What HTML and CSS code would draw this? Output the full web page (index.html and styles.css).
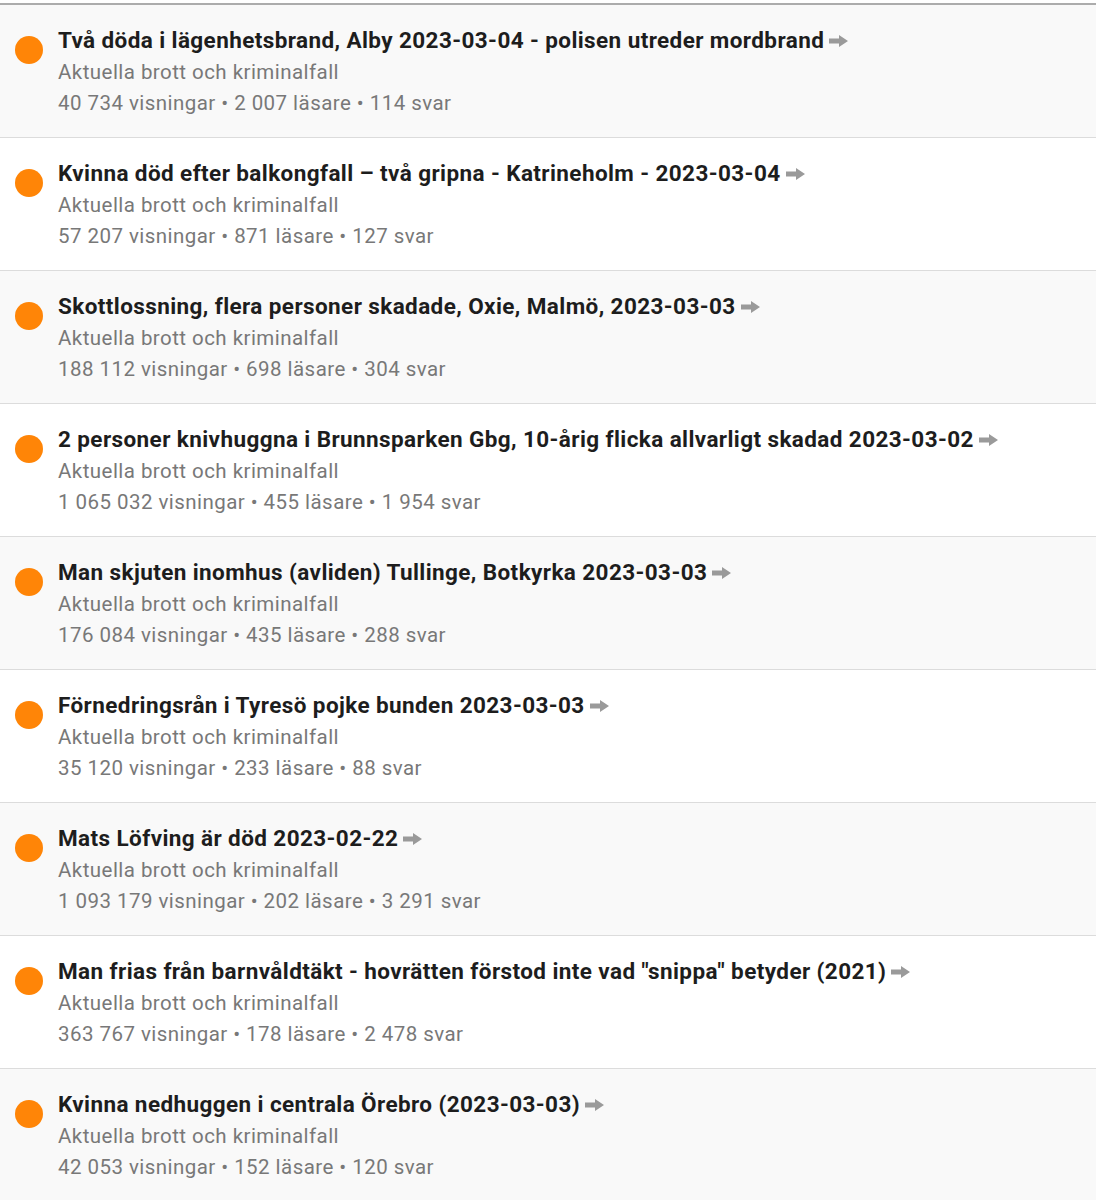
FILE: index.html
```html
<!DOCTYPE html>
<html lang="sv">
<head>
<meta charset="utf-8">
<title>Trådar</title>
<link rel="stylesheet" href="styles.css">
</head>
<body>
<ul class="threads">
  <li class="thread">
    <span class="dot"></span>
    <div class="body">
      <div class="title">Två döda i lägenhetsbrand, Alby 2023-03-04 - polisen utreder mordbrand<svg class="arrow" viewBox="0 0 19 12" width="19" height="12"><path d="M0 3.5H10V0L19 6L10 12V8.5H0Z"/></svg></div>
      <div class="forum">Aktuella brott och kriminalfall</div>
      <div class="stats">40 734 visningar • 2 007 läsare • 114 svar</div>
    </div>
  </li>
  <li class="thread">
    <span class="dot"></span>
    <div class="body">
      <div class="title">Kvinna död efter balkongfall – två gripna - Katrineholm - 2023-03-04<svg class="arrow" viewBox="0 0 19 12" width="19" height="12"><path d="M0 3.5H10V0L19 6L10 12V8.5H0Z"/></svg></div>
      <div class="forum">Aktuella brott och kriminalfall</div>
      <div class="stats">57 207 visningar • 871 läsare • 127 svar</div>
    </div>
  </li>
  <li class="thread">
    <span class="dot"></span>
    <div class="body">
      <div class="title">Skottlossning, flera personer skadade, Oxie, Malmö, 2023-03-03<svg class="arrow" viewBox="0 0 19 12" width="19" height="12"><path d="M0 3.5H10V0L19 6L10 12V8.5H0Z"/></svg></div>
      <div class="forum">Aktuella brott och kriminalfall</div>
      <div class="stats">188 112 visningar • 698 läsare • 304 svar</div>
    </div>
  </li>
  <li class="thread">
    <span class="dot"></span>
    <div class="body">
      <div class="title">2 personer knivhuggna i Brunnsparken Gbg, 10-årig flicka allvarligt skadad 2023-03-02<svg class="arrow" viewBox="0 0 19 12" width="19" height="12"><path d="M0 3.5H10V0L19 6L10 12V8.5H0Z"/></svg></div>
      <div class="forum">Aktuella brott och kriminalfall</div>
      <div class="stats">1 065 032 visningar • 455 läsare • 1 954 svar</div>
    </div>
  </li>
  <li class="thread">
    <span class="dot"></span>
    <div class="body">
      <div class="title">Man skjuten inomhus (avliden) Tullinge, Botkyrka 2023-03-03<svg class="arrow" viewBox="0 0 19 12" width="19" height="12"><path d="M0 3.5H10V0L19 6L10 12V8.5H0Z"/></svg></div>
      <div class="forum">Aktuella brott och kriminalfall</div>
      <div class="stats">176 084 visningar • 435 läsare • 288 svar</div>
    </div>
  </li>
  <li class="thread">
    <span class="dot"></span>
    <div class="body">
      <div class="title">Förnedringsrån i Tyresö pojke bunden 2023-03-03<svg class="arrow" viewBox="0 0 19 12" width="19" height="12"><path d="M0 3.5H10V0L19 6L10 12V8.5H0Z"/></svg></div>
      <div class="forum">Aktuella brott och kriminalfall</div>
      <div class="stats">35 120 visningar • 233 läsare • 88 svar</div>
    </div>
  </li>
  <li class="thread">
    <span class="dot"></span>
    <div class="body">
      <div class="title">Mats Löfving är död 2023-02-22<svg class="arrow" viewBox="0 0 19 12" width="19" height="12"><path d="M0 3.5H10V0L19 6L10 12V8.5H0Z"/></svg></div>
      <div class="forum">Aktuella brott och kriminalfall</div>
      <div class="stats">1 093 179 visningar • 202 läsare • 3 291 svar</div>
    </div>
  </li>
  <li class="thread">
    <span class="dot"></span>
    <div class="body">
      <div class="title">Man frias från barnvåldtäkt - hovrätten förstod inte vad "snippa" betyder (2021)<svg class="arrow" viewBox="0 0 19 12" width="19" height="12"><path d="M0 3.5H10V0L19 6L10 12V8.5H0Z"/></svg></div>
      <div class="forum">Aktuella brott och kriminalfall</div>
      <div class="stats">363 767 visningar • 178 läsare • 2 478 svar</div>
    </div>
  </li>
  <li class="thread">
    <span class="dot"></span>
    <div class="body">
      <div class="title">Kvinna nedhuggen i centrala Örebro (2023-03-03)<svg class="arrow" viewBox="0 0 19 12" width="19" height="12"><path d="M0 3.5H10V0L19 6L10 12V8.5H0Z"/></svg></div>
      <div class="forum">Aktuella brott och kriminalfall</div>
      <div class="stats">42 053 visningar • 152 läsare • 120 svar</div>
    </div>
  </li>
</ul>
</body>
</html>
```

FILE: styles.css
```css
html, body {
  margin: 0;
  padding: 0;
  background: #ffffff;
}
body {
  padding-top: 3px;
  font-family: Roboto, "Liberation Sans", Arial, sans-serif;
}
.threads {
  list-style: none;
  margin: 0;
  padding: 0;
  border-top: 2px solid #acacac;
}
.thread {
  display: flex;
  align-items: flex-start;
  height: 132px;
  box-sizing: content-box;
  border-bottom: 1px solid #dcdcdc;
  background: #f9f9f9;
}
.thread:nth-child(even) {
  background: #ffffff;
}
.dot {
  flex: none;
  width: 28px;
  height: 28px;
  border-radius: 50%;
  background: #ff8507;
  margin: 31px 0 0 15px;
}
.body {
  padding: 20px 0 0 15px;
}
.title {
  font-size: 22.5px;
  letter-spacing: 0.4px;
  line-height: 31px;
  font-weight: 700;
  color: #1d1d1d;
  white-space: nowrap;
}
.arrow {
  fill: #9a9a9a;
  margin-left: 5px;
  vertical-align: 1px;
}
.forum {
  font-size: 20.5px;
  letter-spacing: 0.45px;
  line-height: 32px;
  color: #787878;
}
.stats {
  font-size: 20.5px;
  letter-spacing: 0.45px;
  line-height: 31px;
  color: #787878;
}
```
